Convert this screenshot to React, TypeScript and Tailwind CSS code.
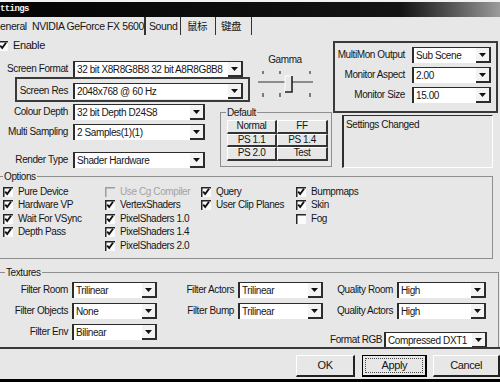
import React from "react";

function Select({ value, className = "" }: { value: string; className?: string }) {
  return (
    <div className={`flex h-[16px] bg-white border-l-2 border-t border-[#2c2c2c] ${className}`}>
      <span className="flex-1 pl-[2px] flex items-center overflow-hidden whitespace-nowrap">{value}</span>
      <span className="w-[15px] flex items-center justify-center bg-[#f3f3f3] border-r-2 border-b-2 border-[#2c2c2c]">
        <svg width="7" height="4" viewBox="0 0 7 4">
          <path d="M0 0h7L3.5 4z" fill="#111" />
        </svg>
      </span>
    </div>
  );
}

function Check({ checked = true, disabled = false }: { checked?: boolean; disabled?: boolean }) {
  return (
    <svg width="10" height="10" viewBox="0 0 10 10" className="shrink-0">
      <rect x="0" y="0" width="10" height="10" fill={disabled ? "#e7e7e7" : "#fbfbfb"} />
      <path d="M0.75 10V0.75H10" fill="none" stroke={disabled ? "#9c9c9c" : "#262626"} strokeWidth="1.5" />
      {checked && <path d="M2.2 4.6l2 2.4 3.8-5.2" fill="none" stroke="#111" strokeWidth="1.9" />}
    </svg>
  );
}

function Opt({ label, checked = true, disabled = false }: { label: string; checked?: boolean; disabled?: boolean }) {
  return (
    <div className="flex items-center h-[13.5px] gap-[5px] whitespace-nowrap">
      <Check checked={checked} disabled={disabled} />
      <span className={disabled ? "text-[#a3a3a3]" : ""}>{label}</span>
    </div>
  );
}

function Field({ label, value, selW }: { label: string; value: string; selW: string }) {
  return (
    <div className="flex items-center h-[16px]">
      <span className="w-[68px] text-right whitespace-nowrap">{label}</span>
      <Select value={value} className={`ml-[5px] ${selW}`} />
    </div>
  );
}

function Cell({ text, w }: { text: string; w: string }) {
  return (
    <div className={`${w} h-full flex items-center justify-center border-t border-l border-white border-r-2 border-b-2 border-r-[#333] border-b-[#333]`}>
      {text}
    </div>
  );
}

export default function App() {
  return (
    <div className="w-[500px] h-[382px] overflow-hidden bg-[#e7e7e7] text-[#161616] text-[10px] tracking-[-0.4px] leading-none whitespace-nowrap font-['Liberation_Sans','Noto_Sans_CJK_SC',sans-serif] flex flex-col">
      {/* title bar */}
      <div className="h-[2px] bg-[#f2f2f2]" />
      <div className="h-[15px] bg-linear-to-r from-[#050505] via-[#141414] via-80% to-[#9c9c9c] text-[#f4f4f4] font-['Liberation_Mono',monospace] font-bold text-[9px] tracking-[-0.6px] flex items-center">
        ttings
      </div>

      {/* tabs */}
      <div className="h-[18px] flex items-stretch text-[10.5px]">
        <div className="w-[27px] flex items-center">eneral</div>
        <div className="w-[119px] flex items-center pl-[5px] border-r-2 border-[#333]">NVIDIA GeForce FX 5600</div>
        <div className="w-[35px] flex items-center pl-[3px] border-r border-[#333]">Sound</div>
        <div className="w-[35px] flex items-center pl-[6px] border-r border-[#333]">鼠标</div>
        <div className="w-[36px] flex items-center pl-[5px] border-r border-[#333]">键盘</div>
      </div>

      {/* top section */}
      <div className="h-[135px] flex">
        <div className="w-[333px] flex flex-col">
          <div className="h-[67px] flex">
            <div className="w-[250px] flex flex-col">
              <div className="mt-[4px] h-[13px] flex items-center gap-[5px] -ml-[2px] text-[11px]">
                <Check />
                <span>Enable</span>
              </div>
              <div className="mt-[9px]">
                <Field label="Screen Format" value="32 bit X8R8G8B8 32 bit A8R8G8B8" selW="w-[170px]" />
              </div>
              <div className="ml-[15px] w-[235px] h-[25px] border-2 border-[#3a3a3a] flex items-start pt-[4px]">
                <span className="w-[51px] text-right h-[16px] flex items-center justify-end">Screen Res</span>
                <Select value="2048x768 @ 60 Hz" className="ml-[5px] w-[170px]" />
              </div>
            </div>
            <div className="ml-[5px] w-[60px] flex flex-col items-center">
              <span className="mt-[20px]">Gamma</span>
              <svg width="60" height="32" viewBox="0 0 60 32" className="mt-[2px]">
                <g stroke="#333" strokeWidth="1.2">
                  <path d="M8 4v3M25 4v3M55 4v3" />
                  <path d="M8 26v4M25 26v4M55 26v4" />
                  <path d="M3 15H58" />
                </g>
                <rect x="30" y="9" width="7" height="16" fill="#e7e7e7" />
                <path d="M30 9h7M30 9v16" stroke="#fff" strokeWidth="1" />
                <path d="M37 9v16H30" fill="none" stroke="#222" strokeWidth="1.6" />
              </svg>
            </div>
          </div>
          <div className="h-[68px] flex">
            <div className="w-[210px] flex flex-col">
              <div className="mt-[2px]">
                <Field label="Colour Depth" value="32 bit Depth D24S8" selW="w-[132px]" />
              </div>
              <div className="mt-[4px]">
                <Field label="Multi Sampling" value="2 Samples(1)(1)" selW="w-[132px]" />
              </div>
              <div className="mt-[12px]">
                <Field label="Render Type" value="Shader Hardware" selW="w-[132px]" />
              </div>
            </div>
            <fieldset className="ml-[10px] mt-[5px] w-[112px] h-[60px] border border-[#8e8e8e]">
              <legend className="ml-[5px] px-[1px] h-[11px] leading-[11px]">Default</legend>
              <div className="ml-[6px] mt-[2px] w-[101px] flex flex-col">
                <div className="h-[13.5px] flex">
                  <Cell text="Normal" w="w-[50px]" />
                  <Cell text="FF" w="w-[51px]" />
                </div>
                <div className="h-[13.5px] flex">
                  <Cell text="PS 1.1" w="w-[50px]" />
                  <Cell text="PS 1.4" w="w-[51px]" />
                </div>
                <div className="h-[13.5px] flex">
                  <Cell text="PS 2.0" w="w-[50px]" />
                  <Cell text="Test" w="w-[51px]" />
                </div>
              </div>
            </fieldset>
          </div>
        </div>

        <div className="w-[165px] flex flex-col">
          <div className="mt-[6px] h-[72px] border-2 border-[#3a3a3a] flex flex-col gap-[4px] pt-[4px]">
            <div className="flex items-center h-[16px]">
              <span className="w-[70px] text-right">MultiMon Output</span>
              <Select value="Sub Scene" className="ml-[7px] w-[79px]" />
            </div>
            <div className="flex items-center h-[16px]">
              <span className="w-[70px] text-right">Monitor Aspect</span>
              <Select value="2.00" className="ml-[7px] w-[79px]" />
            </div>
            <div className="flex items-center h-[16px]">
              <span className="w-[70px] text-right">Monitor Size</span>
              <Select value="15.00" className="ml-[7px] w-[79px]" />
            </div>
          </div>
          <div className="mt-[2px] ml-[9px] w-[151px] h-[53px] border-l-2 border-t border-r border-b border-l-[#2e2e2e] border-t-[#2e2e2e] border-r-white border-b-white pl-[2px] pt-[4px]">
            Settings Changed
          </div>
        </div>
      </div>

      {/* options */}
      <fieldset className="-ml-[1px] mt-[1px] w-[494px] h-[88px] border border-[#8e8e8e]">
        <legend className="ml-[3px] px-[1px] h-[11px] leading-[11px]">Options</legend>
        <div className="flex pt-[3px]">
          <div className="w-[105px] pl-[3px] flex flex-col">
            <Opt label="Pure Device" />
            <Opt label="Hardware VP" />
            <Opt label="Wait For VSync" />
            <Opt label="Depth Pass" />
          </div>
          <div className="w-[96px] flex flex-col">
            <Opt label="Use Cg Compiler" checked={false} disabled />
            <Opt label="VertexShaders" />
            <Opt label="PixelShaders 1.0" />
            <Opt label="PixelShaders 1.4" />
            <Opt label="PixelShaders 2.0" />
          </div>
          <div className="w-[95px] flex flex-col">
            <Opt label="Query" />
            <Opt label="User Clip Planes" />
          </div>
          <div className="flex flex-col">
            <Opt label="Bumpmaps" />
            <Opt label="Skin" />
            <Opt label="Fog" checked={false} />
          </div>
        </div>
      </fieldset>

      {/* textures */}
      <fieldset className="-ml-[1px] mt-[8px] w-[500px] h-[80px] border border-b-0 border-[#8e8e8e]">
        <legend className="ml-[5px] px-[1px] h-[11px] leading-[11px]">Textures</legend>
        <div className="pt-[4px] flex flex-col gap-[5px]">
          <div className="flex items-center h-[16px]">
            <span className="w-[68px] text-right">Filter Room</span>
            <Select value="Trilinear" className="ml-[4px] w-[85px]" />
            <span className="w-[77px] text-right">Filter Actors</span>
            <Select value="Trilinear" className="ml-[4px] w-[85px]" />
            <span className="w-[70px] text-right">Quality Room</span>
            <Select value="High" className="ml-[4px] w-[89px]" />
          </div>
          <div className="flex items-center h-[16px]">
            <span className="w-[68px] text-right">Filter Objects</span>
            <Select value="None" className="ml-[4px] w-[85px]" />
            <span className="w-[77px] text-right">Filter Bump</span>
            <Select value="Trilinear" className="ml-[4px] w-[85px]" />
            <span className="w-[70px] text-right">Quality Actors</span>
            <Select value="High" className="ml-[4px] w-[89px]" />
          </div>
          <div className="flex items-start">
            <div className="flex items-center h-[16px]">
              <span className="w-[68px] text-right">Filter Env</span>
              <Select value="Bilinear" className="ml-[4px] w-[85px]" />
            </div>
            <div className="ml-[173px] mt-[8px] flex items-center h-[16px]">
              <span className="w-[50px] text-right">Format RGB</span>
              <Select value="Compressed DXT1" className="ml-[4px] w-[103px]" />
            </div>
          </div>
        </div>
      </fieldset>

      {/* buttons */}
      <div className="h-[32px] border-t-2 border-[#383838] flex items-start pt-[6px] text-[11px]">
        <div className="ml-[296px] w-[64px] h-[22px] flex items-center justify-center border-t border-l border-white border-r-2 border-b-2 border-r-[#222] border-b-[#222]">
          OK
        </div>
        <div className="ml-[7px] w-[70px] h-[22px] border border-black border-r-2 border-b-2 p-[2px]">
          <div className="w-full h-full flex items-center justify-center border border-dotted border-[#444]">Apply</div>
        </div>
        <div className="ml-[6px] w-[72px] h-[22px] flex items-center justify-center border-t border-l border-white border-r-2 border-b-2 border-r-[#222] border-b-[#222]">
          Cancel
        </div>
      </div>
      <div className="flex-1 bg-black" />
    </div>
  );
}
